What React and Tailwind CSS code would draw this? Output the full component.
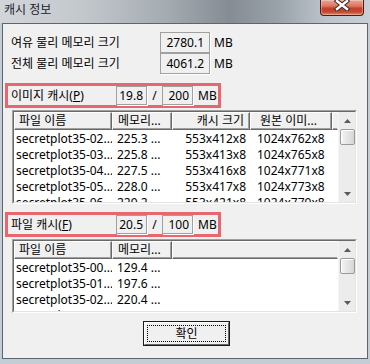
import React from 'react';

const imageRows = [
  ['secretplot35-02...', '225.3 ...', '553x412x8', '1024x762x8'],
  ['secretplot35-03...', '225.8 ...', '553x413x8', '1024x765x8'],
  ['secretplot35-04...', '227.5 ...', '553x416x8', '1024x771x8'],
  ['secretplot35-05...', '228.0 ...', '553x417x8', '1024x773x8'],
  ['secretplot35-06...', '229.2 ...', '553x421x8', '1024x779x8'],
];

const fileRows = [
  ['secretplot35-00...', '129.4 ...'],
  ['secretplot35-01...', '197.6 ...'],
  ['secretplot35-02...', '220.4 ...'],
  ['secretplot35-03...', '222.2 ...'],
];

export default function App() {
  return (
    <div className="w-[370px] h-[364px] bg-[#c4ccd4] flex flex-col overflow-hidden text-[12px] text-black [font-family:'Noto_Sans','Noto_Sans_CJK_KR',sans-serif]">
      {/* ===== TITLE BAR ===== */}
      <div className="h-[23px] flex justify-between items-start bg-[linear-gradient(90deg,#d2d6da_0%,#c3c8cd_22%,#a4abb1_45%,#858c93_62%,#9aa2a9_75%,#bcc3ca_88%,#c8cfd6_100%)]">
        <span className="pl-[4px] pt-[2px] leading-[16px] text-[#1c1c2a]">캐시 정보</span>
        <CloseButton />
      </div>

      {/* ===== CLIENT AREA ===== */}
      <div className="ml-[2px] w-[366px] h-[336px] border border-[#5b6670] bg-[#f0f0f0] flex flex-col">
        <div className="pt-[8px] pl-[8px] flex flex-col">
          <InfoRow label="여유 물리 메모리 크기" value="2780.1" />
          <InfoRow label="전체 물리 메모리 크기" value="4061.2" />
        </div>

        <CacheBar label="이미지 캐시" mnemonic="P" used="19.8" max="200" className="mt-[9px]" />
        <ListView
          className="mt-[2px] h-[94px]"
          columns={[
            { title: '파일 이름', w: 'w-[98px]', hp: 'pl-[4px]', dp: 'pl-[2px]' },
            { title: '메모리...', w: 'w-[60px]', hp: 'pl-[5px]', dp: 'pl-[5px]' },
            { title: '캐시 크기', w: 'w-[78px]', hp: 'pr-[5px] justify-end', dp: 'pr-[4px] text-right' },
            { title: '원본 이미...', w: 'w-[82px]', hp: 'pl-[9px]', dp: 'pl-[7px]' },
          ]}
          rows={imageRows}
        />

        <CacheBar label="파일 캐시" mnemonic="F" used="20.5" max="100" className="mt-[8px]" />
        <ListView
          className="mt-[2px] h-[74px]"
          columns={[
            { title: '파일 이름', w: 'w-[98px]', hp: 'pl-[4px]', dp: 'pl-[2px]' },
            { title: '메모리...', w: 'w-[60px]', hp: 'pl-[5px]', dp: 'pl-[5px]' },
          ]}
          rows={fileRows}
        />

        <div className="mt-[8px] ml-[140px]">
          <button className="w-[87px] h-[25px] border border-[#1a1a1a] bg-[#f0f0f0] p-0">
            <div className="w-full h-full border border-t-white border-l-white border-r-[#696969] border-b-[#696969] p-[2px]">
              <div className="w-full h-full border border-dotted border-black flex items-center justify-center leading-[14px]">
                확인
              </div>
            </div>
          </button>
        </div>
      </div>
    </div>
  );
}

/* ===== HELPERS ===== */

function CloseButton() {
  return (
    <div className="mr-[6px] w-[44px] h-[16px] rounded-b-[4px] border border-t-0 border-[#4b1c14] bg-[linear-gradient(180deg,#eaa594_0%,#dc7762_40%,#c4412c_55%,#c5452f_78%,#e0876a_100%)] shadow-[inset_0_0_0_1px_rgba(255,255,255,0.3)] flex justify-center">
      <svg width="18" height="11" viewBox="0 0 18 11">
        <path d="M4 1 L14 9 M14 1 L4 9" stroke="#3b2b29" strokeWidth="4.5" strokeLinecap="square" />
        <path d="M4 1 L14 9 M14 1 L4 9" stroke="#ffffff" strokeWidth="2.4" strokeLinecap="square" />
      </svg>
    </div>
  );
}

function InfoRow({ label, value }) {
  return (
    <div className="flex items-center h-[21px]">
      <span className="w-[149px] leading-[16px]">{label}</span>
      <div className="w-[50px] h-[21px] border border-[#a0a0a0] shadow-[1px_1px_0_#ffffff] flex items-center justify-end pr-[5px] leading-[16px]">
        {value}
      </div>
      <span className="ml-[4px] leading-[16px]">MB</span>
    </div>
  );
}

function CacheBar({ label, mnemonic, used, max, className }) {
  return (
    <div className={`ml-[2px] w-[216px] h-[25px] border-[3px] border-[#e8676f] flex items-center ${className}`}>
      <span className="w-[108px] pl-[3px] leading-[16px]">
        {label}(<u>{mnemonic}</u>)
      </span>
      <div className="w-[31px] h-[19px] border border-[#a0a0a0] shadow-[1px_1px_0_#ffffff] flex items-center justify-end pr-[3px] leading-[16px]">
        {used}
      </div>
      <span className="w-[15px] text-center leading-[16px]">/</span>
      <div className="w-[31px] h-[19px] border border-[#a0a0a0] shadow-[1px_1px_0_#ffffff] flex items-center justify-end pr-[3px] leading-[16px]">
        {max}
      </div>
      <span className="ml-[5px] leading-[16px]">MB</span>
    </div>
  );
}

function ListView({ columns, rows, className }) {
  return (
    <div className={`ml-[9px] w-[345px] border border-t-[#a0a0a0] border-l-[#a0a0a0] border-r-white border-b-white ${className}`}>
      <div className="w-full h-full border border-t-[#696969] border-l-[#696969] border-r-[#e3e3e3] border-b-[#e3e3e3] bg-white flex overflow-hidden">
        <div className="flex-1 flex flex-col overflow-hidden">
          {/* header */}
          <div className="h-[18px] flex shrink-0 bg-[#f0f0f0]">
            {columns.map((c, i) => (
              <div
                key={i}
                className={`${c.w} ${c.hp} h-full shrink-0 flex items-center whitespace-nowrap overflow-hidden leading-[14px] border border-t-white border-l-white border-r-[#696969] border-b-[#696969] shadow-[inset_-1px_-1px_0_#a0a0a0]`}
              >
                {c.title}
              </div>
            ))}
            <div className="flex-1 h-full border border-t-white border-l-white border-r-[#f0f0f0] border-b-[#696969] shadow-[inset_0_-1px_0_#a0a0a0]" />
          </div>
          {/* rows */}
          <div className="flex flex-col pt-[1px]">
            {rows.map((r, i) => (
              <div key={i} className="flex h-[16px] shrink-0">
                {r.map((cell, j) => (
                  <div
                    key={j}
                    className={`${columns[j].w} ${columns[j].dp} shrink-0 whitespace-nowrap overflow-hidden leading-[16px]`}
                  >
                    {cell}
                  </div>
                ))}
              </div>
            ))}
          </div>
        </div>
        <ScrollBar />
      </div>
    </div>
  );
}

function ScrollBar() {
  return (
    <div className="w-[17px] h-full shrink-0 bg-[#ececec] border-l border-[#f4f4f4] flex flex-col">
      <div className="h-[17px] shrink-0 flex items-center justify-center">
        <svg width="7" height="4" viewBox="0 0 7 4">
          <path d="M3.5 0 L7 4 L0 4 Z" fill="#5a5a5a" />
        </svg>
      </div>
      <div className="flex-1 flex flex-col">
        <div className="ml-[1px] w-[15px] h-[16px] rounded-[2px] border border-[#9a9a9a] bg-gradient-to-r from-[#f4f4f4] to-[#d6d6d6] shadow-[inset_1px_1px_0_#ffffff]" />
      </div>
      <div className="h-[17px] shrink-0 flex items-center justify-center">
        <svg width="7" height="4" viewBox="0 0 7 4">
          <path d="M0 0 L7 0 L3.5 4 Z" fill="#5a5a5a" />
        </svg>
      </div>
    </div>
  );
}
